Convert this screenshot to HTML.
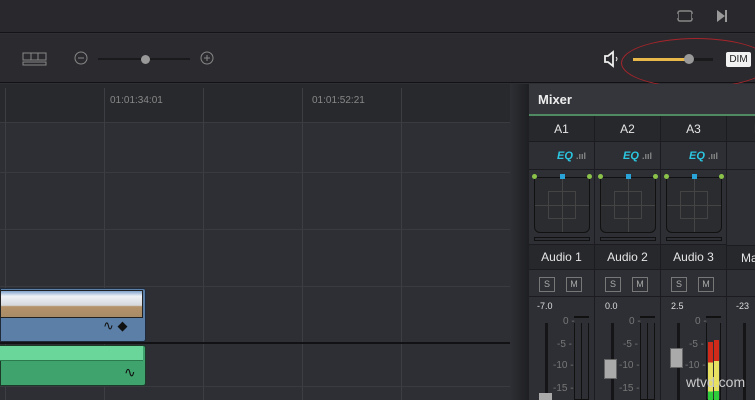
<!DOCTYPE html><html><head><style>
*{margin:0;padding:0;box-sizing:border-box}
html,body{width:755px;height:400px;overflow:hidden}
body{background:#2e2f34;font-family:"Liberation Sans",sans-serif;position:relative}
.a{position:absolute}
.vl{position:absolute;width:1px;background:#3d3e43}
.hl{position:absolute;height:1px;background:#3a3b40}
.col{position:absolute;top:116px;width:66px;height:284px;border-right:1px solid #1c1c20}
.col .r{position:absolute;left:0;right:0;border-bottom:1px solid #1c1c20;color:#e6e6e6;font-size:12px;text-align:center}
.sm{position:absolute;top:277px;width:16px;height:15px;border:1px solid #777;color:#aaa;font-size:9px;text-align:center;line-height:13px}
.sc{position:absolute;color:#777;font-size:10px}
</style></head><body>
<div class="a" style="left:0;top:0;width:755px;height:33px;background:#28282d;border-bottom:1px solid #141416"></div>
<svg class="a" style="left:675px;top:8px" width="20" height="16"><rect x="3" y="3" width="14" height="10" rx="2" fill="none" stroke="#888" stroke-width="1.5"/><rect x="0" y="6" width="3" height="4" fill="#28282d"/><rect x="17" y="6" width="3" height="4" fill="#28282d"/></svg>
<svg class="a" style="left:715px;top:8px" width="14" height="16"><path d="M2 2 L10 8 L2 14Z" fill="#999"/><rect x="10" y="2" width="2" height="12" fill="#999"/></svg>
<div class="a" style="left:0;top:34px;width:755px;height:49px;background:#2a2a2f;border-bottom:1px solid #121214"></div>
<svg class="a" style="left:22px;top:52px" width="26" height="16"><rect x="1" y="1" width="23" height="7" fill="none" stroke="#888"/><line x1="9" y1="1" x2="9" y2="8" stroke="#888"/><line x1="16" y1="1" x2="16" y2="8" stroke="#888"/><rect x="1" y="10" width="23" height="3" fill="none" stroke="#888"/></svg>
<svg class="a" style="left:74px;top:51px" width="14" height="14"><circle cx="7" cy="7" r="6" fill="none" stroke="#888"/><line x1="4" y1="7" x2="10" y2="7" stroke="#888"/></svg>
<div class="a" style="left:98px;top:58px;width:92px;height:2px;background:#1a1a1d"></div>
<div class="a" style="left:141px;top:55px;width:9px;height:9px;border-radius:50%;background:#999"></div>
<svg class="a" style="left:200px;top:51px" width="14" height="14"><circle cx="7" cy="7" r="6" fill="none" stroke="#888"/><line x1="4" y1="7" x2="10" y2="7" stroke="#888"/><line x1="7" y1="4" x2="7" y2="10" stroke="#888"/></svg>
<svg class="a" style="left:603px;top:50px" width="22" height="18"><path d="M2 6 H5 L10 2 V16 L5 12 H2Z" fill="none" stroke="#eee" stroke-width="1.8"/><path d="M13 7 Q15 9 13 11" fill="none" stroke="#eee"/></svg>
<div class="a" style="left:633px;top:58px;width:80px;height:3px;background:#1a1a1c"></div>
<div class="a" style="left:633px;top:58px;width:55px;height:3px;background:#e8b84a"></div>
<div class="a" style="left:684px;top:54px;width:10px;height:10px;border-radius:50%;background:#999"></div>
<div class="a" style="left:726px;top:52px;width:25px;height:15px;background:#f2f2f2;border-radius:2px;color:#222;font-size:10px;text-align:center;line-height:15px">DIM</div>
<div class="a" style="left:621px;top:38px;width:150px;height:50px;border:1px solid #a5252b;border-radius:50%"></div>
<div class="a" style="left:0;top:84px;width:529px;height:39px;background:#28292d;border-bottom:1px solid #3a3b40"></div>
<div class="vl" style="left:5px;top:88px;height:312px"></div>
<div class="vl" style="left:104px;top:88px;height:312px"></div>
<div class="vl" style="left:203px;top:88px;height:312px"></div>
<div class="vl" style="left:302px;top:88px;height:312px"></div>
<div class="vl" style="left:401px;top:88px;height:312px"></div>
<div class="a" style="left:110px;top:95px;color:#888;font-size:10px">01:01:34:01</div>
<div class="a" style="left:312px;top:95px;color:#888;font-size:10px">01:01:52:21</div>
<div class="hl" style="left:0;top:172px;width:510px"></div>
<div class="hl" style="left:0;top:229px;width:510px"></div>
<div class="hl" style="left:0;top:286px;width:510px"></div>
<div class="hl" style="left:0;top:386px;width:510px"></div>
<div class="a" style="left:0;top:342px;width:529px;height:2px;background:#121214"></div>
<div class="a" style="left:0;top:288px;width:146px;height:54px;background:#5b7fa6;border:1px solid #1f2a3a;border-radius:0 3px 3px 0"></div>
<div class="a" style="left:0;top:290px;width:143px;height:28px;background:linear-gradient(#7fa3cc 0%,#eef2f7 20%,#d5d8dc 55%,#b4926a 60%,#a88c66 100%);border:1px solid #222"></div>
<div class="a" style="left:103px;top:318px;font-size:13px;color:#111">∿ ◆</div>
<div class="a" style="left:0;top:345px;width:146px;height:41px;background:#3ea36d;border:1px solid #1d3a28;border-radius:0 3px 3px 0"></div>
<div class="a" style="left:0;top:346px;width:143px;height:15px;background:#6ad69a;border-bottom:1px solid #2b7a4e"></div>
<div class="a" style="left:124px;top:364px;font-size:14px;color:#111">∿</div>
<div class="a" style="left:510px;top:84px;width:19px;height:316px;background:linear-gradient(90deg,#2e2f34,#1e1f22)"></div>
<div class="a" style="left:529px;top:84px;width:226px;height:316px;background:#2e2f34"></div>
<div class="a" style="left:529px;top:84px;width:226px;height:30px;background:#35363b;color:#eee;font-size:13px;font-weight:bold;padding:8px 0 0 9px">Mixer</div>
<div class="a" style="left:529px;top:114px;width:226px;height:3px;background:#4f8a63"></div>

<div class="col" style="left:529px">
<div class="r" style="top:0;height:26px;line-height:26px;background:#27282c">A1</div>
<div class="r" style="top:26px;height:28px;text-align:right;padding-right:8px;line-height:28px;color:#2bc6e0;font-weight:bold;font-style:italic;font-size:11px">EQ <span style="color:#888;font-style:normal;font-size:9px">.ııl</span></div>
<div class="r" style="top:54px;height:75px"><div class="a" style="left:5px;top:7px;width:56px;height:56px;border:1px solid #111;border-radius:0 0 6px 6px;background:#2b2c30"><div class="a" style="left:13px;top:13px;width:28px;height:28px;border:1px solid #444"></div><div class="a" style="left:27px;top:0;width:1px;height:54px;background:#444"></div><div class="a" style="left:0;top:27px;width:54px;height:1px;background:#444"></div></div><div class="a" style="left:3px;top:4px;width:5px;height:5px;border-radius:50%;background:#8bc34a"></div><div class="a" style="left:58px;top:4px;width:5px;height:5px;border-radius:50%;background:#8bc34a"></div><div class="a" style="left:31px;top:4px;width:5px;height:5px;background:#29a3d8"></div><div class="a" style="left:5px;top:67px;width:56px;height:4px;border:1px solid #111"></div></div>
<div class="r" style="top:129px;height:25px;line-height:25px;background:#27282c">Audio 1</div>
<div class="r" style="top:154px;height:27px"></div>
</div>
<div class="col" style="left:595px">
<div class="r" style="top:0;height:26px;line-height:26px;background:#27282c">A2</div>
<div class="r" style="top:26px;height:28px;text-align:right;padding-right:8px;line-height:28px;color:#2bc6e0;font-weight:bold;font-style:italic;font-size:11px">EQ <span style="color:#888;font-style:normal;font-size:9px">.ııl</span></div>
<div class="r" style="top:54px;height:75px"><div class="a" style="left:5px;top:7px;width:56px;height:56px;border:1px solid #111;border-radius:0 0 6px 6px;background:#2b2c30"><div class="a" style="left:13px;top:13px;width:28px;height:28px;border:1px solid #444"></div><div class="a" style="left:27px;top:0;width:1px;height:54px;background:#444"></div><div class="a" style="left:0;top:27px;width:54px;height:1px;background:#444"></div></div><div class="a" style="left:3px;top:4px;width:5px;height:5px;border-radius:50%;background:#8bc34a"></div><div class="a" style="left:58px;top:4px;width:5px;height:5px;border-radius:50%;background:#8bc34a"></div><div class="a" style="left:31px;top:4px;width:5px;height:5px;background:#29a3d8"></div><div class="a" style="left:5px;top:67px;width:56px;height:4px;border:1px solid #111"></div></div>
<div class="r" style="top:129px;height:25px;line-height:25px;background:#27282c">Audio 2</div>
<div class="r" style="top:154px;height:27px"></div>
</div>
<div class="col" style="left:661px">
<div class="r" style="top:0;height:26px;line-height:26px;background:#27282c">A3</div>
<div class="r" style="top:26px;height:28px;text-align:right;padding-right:8px;line-height:28px;color:#2bc6e0;font-weight:bold;font-style:italic;font-size:11px">EQ <span style="color:#888;font-style:normal;font-size:9px">.ııl</span></div>
<div class="r" style="top:54px;height:75px"><div class="a" style="left:5px;top:7px;width:56px;height:56px;border:1px solid #111;border-radius:0 0 6px 6px;background:#2b2c30"><div class="a" style="left:13px;top:13px;width:28px;height:28px;border:1px solid #444"></div><div class="a" style="left:27px;top:0;width:1px;height:54px;background:#444"></div><div class="a" style="left:0;top:27px;width:54px;height:1px;background:#444"></div></div><div class="a" style="left:3px;top:4px;width:5px;height:5px;border-radius:50%;background:#8bc34a"></div><div class="a" style="left:58px;top:4px;width:5px;height:5px;border-radius:50%;background:#8bc34a"></div><div class="a" style="left:31px;top:4px;width:5px;height:5px;background:#29a3d8"></div><div class="a" style="left:5px;top:67px;width:56px;height:4px;border:1px solid #111"></div></div>
<div class="r" style="top:129px;height:25px;line-height:25px;background:#27282c">Audio 3</div>
<div class="r" style="top:154px;height:27px"></div>
</div>
<div class="col" style="left:727px;border:none">
<div class="r" style="top:0;height:26px;line-height:26px;background:#27282c;text-align:left;padding-left:27px">M</div>
<div class="r" style="top:26px;height:28px"></div>
<div class="r" style="top:54px;height:75px;border:none"></div>
<div class="r" style="top:129px;height:25px;line-height:25px;background:#27282c;text-align:left;padding-left:14px;border-top:1px solid #1c1c20">Ma</div>
<div class="r" style="top:154px;height:27px"></div>
</div>
<div class="sm" style="left:539px">S</div><div class="sm" style="left:566px">M</div>
<div class="sm" style="left:605px">S</div><div class="sm" style="left:632px">M</div>
<div class="sm" style="left:671px">S</div><div class="sm" style="left:698px">M</div>
<div class="a" style="left:537px;top:301px;color:#ddd;font-size:9px">-7.0</div>
<div class="a" style="left:605px;top:301px;color:#ddd;font-size:9px">0.0</div>
<div class="a" style="left:671px;top:301px;color:#ddd;font-size:9px">2.5</div>
<div class="a" style="left:736px;top:301px;color:#ddd;font-size:9px">-23</div>
<div class="a" style="left:545px;top:323px;width:3px;height:77px;background:#151517"></div>
<div class="a" style="left:611px;top:323px;width:3px;height:77px;background:#151517"></div>
<div class="a" style="left:677px;top:323px;width:3px;height:77px;background:#151517"></div>
<div class="a" style="left:743px;top:323px;width:3px;height:77px;background:#151517"></div>
<div class="a" style="left:539px;top:393px;width:13px;height:10px;background:#aaa"></div>
<div class="a" style="left:604px;top:359px;width:13px;height:20px;background:#aaa;border:1px solid #666"></div>
<div class="a" style="left:670px;top:348px;width:13px;height:20px;background:#aaa;border:1px solid #666"></div>
<div class="sc" style="left:563px;top:316px">0 -</div><div class="sc" style="left:557px;top:339px">-5 -</div><div class="sc" style="left:553px;top:360px">-10 -</div><div class="sc" style="left:553px;top:383px">-15 -</div>
<div class="sc" style="left:629px;top:316px">0 -</div><div class="sc" style="left:623px;top:339px">-5 -</div><div class="sc" style="left:619px;top:360px">-10 -</div><div class="sc" style="left:619px;top:383px">-15 -</div>
<div class="sc" style="left:695px;top:316px">0 -</div><div class="sc" style="left:689px;top:339px">-5 -</div><div class="sc" style="left:685px;top:360px">-10 -</div>
<div class="a" style="left:574px;top:316px;width:15px;height:2px;background:#111"></div>
<div class="a" style="left:574px;top:323px;width:15px;height:77px;border:1px solid #111;border-top:none"><div style="position:absolute;left:6px;top:0;width:1px;height:77px;background:#111"></div></div>
<div class="a" style="left:640px;top:316px;width:15px;height:2px;background:#111"></div>
<div class="a" style="left:640px;top:323px;width:15px;height:77px;border:1px solid #111;border-top:none"><div style="position:absolute;left:6px;top:0;width:1px;height:77px;background:#111"></div></div>
<div class="a" style="left:706px;top:316px;width:15px;height:2px;background:#111"></div>
<div class="a" style="left:706px;top:323px;width:15px;height:77px;border:1px solid #111;border-top:none">
<div style="position:absolute;left:1px;top:19px;width:5px;height:58px;background:linear-gradient(#d02a1a 0,#d02a1a 35%,#e8e060 35%,#e8e060 85%,#2ecc3a 85%)"></div>
<div style="position:absolute;left:7px;top:17px;width:5px;height:60px;background:linear-gradient(#d02a1a 0,#d02a1a 35%,#e8e060 35%,#e8e060 85%,#2ecc3a 85%)"></div></div>
<div class="a" style="left:686px;top:374px;color:#ccc;font-size:14px">wtvd.com</div>
</body></html>
